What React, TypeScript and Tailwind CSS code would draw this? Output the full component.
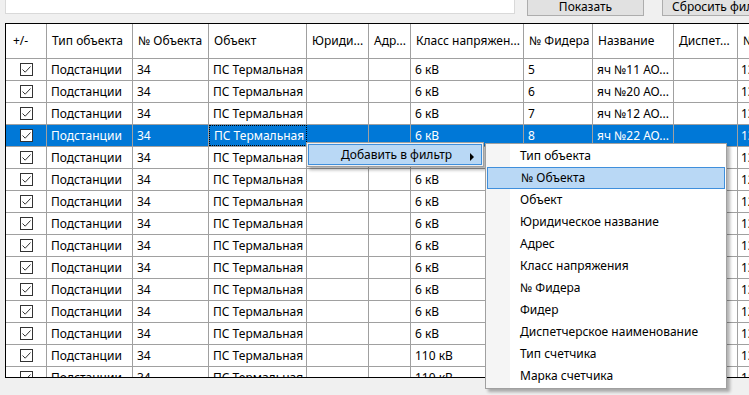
import React from 'react';

type Row = { volt: string; feeder: string; name: string; last: string };

const cols = [
  { title: '+/-', w: 'w-[41px]' },
  { title: 'Тип объекта', w: 'w-[86px]' },
  { title: '№ Объекта', w: 'w-[76px]' },
  { title: 'Объект', w: 'w-[98px]' },
  { title: 'Юриди...', w: 'w-[62px]' },
  { title: 'Адр...', w: 'w-[42px]' },
  { title: 'Класс напряжен...', w: 'w-[113px]' },
  { title: '№ Фидера', w: 'w-[69px]' },
  { title: 'Название', w: 'w-[81px]' },
  { title: 'Диспет...', w: 'w-[64px]' },
  { title: '№ Счетчика', w: 'w-[200px]' },
];

const lastVals = ['13', '13', '13', '13', '13', '12', '12', '13', '13', '13', '13', '12', '13', '13', '11'];
const names = ['яч №11 АО...', 'яч №20 АО...', 'яч №12 АО...', 'яч №22 АО...'];

const rows: Row[] = lastVals.map((v, i) => ({
  volt: i < 13 ? '6 кВ' : '110 кВ',
  feeder: String(i + 5),
  name: names[i] ?? 'яч №' + (i + 3) + ' АО...',
  last: v + '30562',
}));

const submenu = [
  'Тип объекта',
  '№ Объекта',
  'Объект',
  'Юридическое название',
  'Адрес',
  'Класс напряжения',
  '№ Фидера',
  'Фидер',
  'Диспетчерское наименование',
  'Тип счетчика',
  'Марка счетчика',
];

const Check: React.FC = () => (
  <div className="w-[13px] h-[13px] border border-[#333333] bg-white flex items-center justify-center">
    <svg width="11" height="11" viewBox="0 0 11 11">
      <path d="M1.5 5.5 L4.2 8.2 L9.5 2.5" fill="none" stroke="#333333" strokeWidth="1" />
    </svg>
  </div>
);

const App: React.FC = () => {
  return (
    <div
      className="w-[749px] h-[395px] bg-[#f0f0f0] overflow-hidden relative text-[12px] text-black"
      style={{ fontFamily: '"Noto Sans", Roboto, sans-serif' }}
    >
      {/* top filter bar, partly scrolled out */}
      <div className="h-[16px] flex items-end overflow-hidden pl-[5px]">
        <div className="w-[510px] h-[22px] mb-[2px] shrink-0 bg-white border border-[#d9d9d9]" />
        <button className="ml-[12px] w-[117px] h-[24px] shrink-0 bg-[#e1e1e1] border border-[#adadad] flex items-center justify-center pt-[6px]">
          Показать
        </button>
        <button className="ml-[18px] w-[120px] h-[24px] shrink-0 bg-[#e1e1e1] border border-[#adadad] flex items-center justify-center pt-[6px] whitespace-nowrap">
          Сбросить фильтр
        </button>
      </div>

      {/* data grid */}
      <div className="mt-[7px] ml-[5px] w-[1000px] h-[355px] border border-black border-r-0 bg-white overflow-hidden">
        <div className="flex h-[35px] border-b border-[#a0a0a0]">
          {cols.map((c, i) => (
            <div
              key={i}
              className={`${c.w} shrink-0 h-full border-r border-[#a0a0a0] flex items-center whitespace-nowrap overflow-hidden ${i === 0 ? 'pl-[7px]' : 'pl-[5px]'}`}
            >
              {c.title}
            </div>
          ))}
        </div>
        {rows.map((r, i) => {
          const sel = i === 3;
          const cells = ['', 'Подстанции', '34', 'ПС Термальная', '', '', r.volt, r.feeder, r.name, '', r.last];
          return (
            <div
              key={i}
              className={`flex h-[22px] border-b border-[#a0a0a0] ${sel ? 'bg-[#0078d7] text-white' : ''}`}
            >
              {cells.map((t, j) => (
                <div
                  key={j}
                  className={`${cols[j].w} shrink-0 h-full border-r border-[#a0a0a0] flex items-center whitespace-nowrap overflow-hidden ${j === 0 ? 'justify-center' : j === 10 ? 'pl-[3px]' : 'pl-[4px]'} ${sel && j === 3 ? 'border border-dotted border-black' : ''}`}
                >
                  {j === 0 ? <Check /> : t}
                </div>
              ))}
            </div>
          );
        })}
      </div>

      {/* context menu */}
      <div className="absolute left-[306px] top-[142px] w-[178px] h-[25px] bg-[#f0f0f0] border border-[#a0a0a0] p-[1px] shadow-[3px_3px_3px_rgba(0,0,0,0.3)]">
        <div className="h-full bg-[#b9d8f5] border border-[#3f8fdc] flex items-center relative">
          <span className="ml-[32px]">Добавить в фильтр</span>
          <svg className="absolute left-[161px] top-[8px]" width="5" height="8" viewBox="0 0 5 8">
            <path d="M0 0 L4 4 L0 8 Z" fill="#000" />
          </svg>
        </div>
      </div>

      {/* submenu */}
      <div className="absolute left-[485px] top-[143px] w-[242px] h-[246px] bg-white border border-[#a0a0a0] py-[1px] shadow-[3px_3px_3px_rgba(0,0,0,0.3)]">
        <div className="absolute left-0 top-0 bottom-0 w-[24px] bg-[#f5f5f5]" />
        <div className="relative flex flex-col">
          {submenu.map((s, i) => (
            <div
              key={s}
              className={`h-[22px] mx-[1px] flex items-center pl-[33px] ${i === 1 ? 'bg-[#b9d8f5] border border-[#3f8fdc] pl-[32px]' : ''}`}
            >
              {s}
            </div>
          ))}
        </div>
      </div>
    </div>
  );
};

export default App;
